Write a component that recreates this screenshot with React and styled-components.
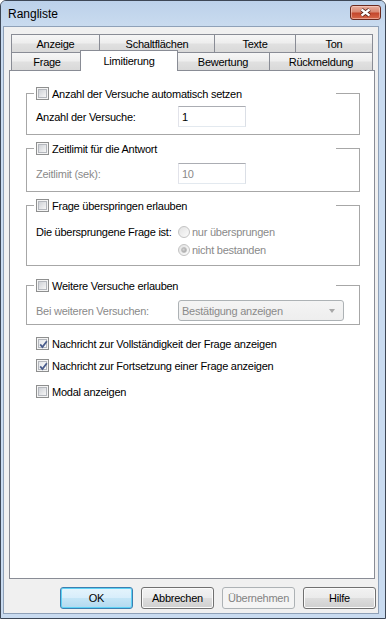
import React from 'react';
import styled, { createGlobalStyle, css } from 'styled-components';

const GlobalStyle = createGlobalStyle`
  html, body {
    margin: 0;
    padding: 0;
    background: #fff;
  }
  body {
    font-family: "Liberation Sans", Arial, sans-serif;
    font-size: 11px;
    letter-spacing: -0.25px;
    color: #000;
  }
`;

const Window = styled.div`
  width: 386px;
  height: 619px;
  box-sizing: border-box;
  border: 1px solid #3d4756;
  border-radius: 6px 6px 0 0;
  background: #c9dbf0;
  display: flex;
  flex-direction: column;
  overflow: hidden;
`;

const TitleBar = styled.div`
  height: 25px;
  flex: none;
  display: flex;
  align-items: center;
  padding: 0 4px 0 7px;
  background: linear-gradient(#bcd1ea, #c9dbef);
`;

const Title = styled.span`
  font-size: 12px;
  letter-spacing: 0;
  flex: 1;
  padding-top: 1px;
`;

const CloseButton = styled.div`
  width: 31px;
  height: 15px;
  box-sizing: border-box;
  align-self: flex-start;
  margin-top: 4px;
  border: 1px solid #6b2a1f;
  border-radius: 3px;
  background: linear-gradient(#e9ad9c 0%, #d98a74 45%, #c4472c 55%, #d7694b 100%);
  box-shadow: inset 0 0 0 1px rgba(255, 220, 210, 0.5);
  display: flex;
  svg { display: block; }
`;

const Body = styled.div`
  flex: 1;
  margin: 0 6px 4px 2px;
  border: 1px solid #8fa1b8;
  background: #f0f0f0;
  display: flex;
  flex-direction: column;
  padding: 7px 2px 4px 5px;
`;

const TabRow = styled.div`
  display: flex;
  margin-left: 2px;
  height: 18px;
`;

const Tab = styled.div`
  box-sizing: border-box;
  width: ${p => p.$w}px;
  height: 18px;
  margin-right: -1px;
  border: 1px solid #898c95;
  border-bottom: none;
  background: linear-gradient(#f6f6f6 0%, #eeeeee 45%, #e0e0e0 55%, #d9d9d9 100%);
  display: flex;
  align-items: center;
  justify-content: center;
  white-space: nowrap;
  padding-top: 1px;
  ${p => p.$active && css`
    position: relative;
    z-index: 1;
    height: 21px;
    margin: -2px -2px -1px -2px;
    background: #fff;
    padding-top: 0;
    padding-bottom: 1px;
  `}
`;

const Panel = styled.div`
  width: 366px;
  height: 509px;
  box-sizing: border-box;
  border: 1px solid #898c95;
  background: #fff;
  padding: 16px 0 0 16px;
  display: flex;
  flex-direction: column;
`;

const GroupBox = styled.fieldset`
  width: 334px;
  box-sizing: border-box;
  min-width: 0;
  margin: ${p => p.$mt || 0}px 0 0 0;
  padding: ${p => p.$pt}px 0 ${p => p.$pb}px 7px;
  border: 1px solid #a7a7a7;
`;

const Legend = styled.legend`
  width: 302px;
  height: 13px;
  box-sizing: border-box;
  padding: 0 0 0 2px;
  display: flex;
  align-items: center;
`;

const CheckLine = styled.div`
  display: flex;
  align-items: center;
  height: 13px;
  gap: 3px;
  margin: ${p => p.$mt || 0}px 0 0 10px;
`;

const Box = styled.span`
  width: 13px;
  height: 13px;
  box-sizing: border-box;
  flex: none;
  border: 1px solid #8e8f8f;
  background: #f4f4f4;
  padding: 1px;
  span {
    display: block;
    width: 100%;
    height: 100%;
    box-sizing: border-box;
    border: 1px solid #b4b7bd;
    background: ${p => p.$checked
      ? 'linear-gradient(135deg, #e4e6ea, #fbfbfb)'
      : 'linear-gradient(135deg, #cfd2d7, #f6f6f6)'};
    position: relative;
  }
  svg {
    position: absolute;
    left: -2px;
    top: -2px;
  }
`;

const Row = styled.div`
  display: flex;
  align-items: ${p => p.$top ? 'flex-start' : 'center'};
  margin-left: 2px;
`;

const FieldLabel = styled.span`
  width: 142px;
  flex: none;
  color: ${p => p.$disabled ? '#8a8a8a' : '#000'};
  white-space: nowrap;
  line-height: 18px;
`;

const TextInput = styled.div`
  width: 68px;
  height: 21px;
  box-sizing: border-box;
  border: 1px solid;
  border-color: #abadb3 #dbdfe6 #e3e9ef #e2e3ea;
  background: #fff;
  padding-left: 3px;
  display: flex;
  align-items: center;
  color: ${p => p.$disabled ? '#8a8a8a' : '#000'};
`;

const Options = styled.div`
  display: flex;
  flex-direction: column;
`;

const Option = styled.div`
  height: 18px;
  display: flex;
  align-items: center;
  gap: 2px;
  color: #8a8a8a;
`;

const Radio = styled.span`
  width: 12px;
  height: 12px;
  box-sizing: border-box;
  border-radius: 50%;
  border: 1px solid #c3c3c3;
  background: linear-gradient(135deg, #e2e2e2, #fbfbfb);
  display: flex;
  align-items: center;
  justify-content: center;
  &::after {
    content: '';
    display: ${p => p.$on ? 'block' : 'none'};
    width: 6px;
    height: 6px;
    border-radius: 50%;
    background: radial-gradient(circle at 40% 40%, #d6d6d6, #9a9a9a);
    border: 1px solid #bdbdbd;
    box-sizing: border-box;
  }
`;

const Combo = styled.div`
  width: 166px;
  height: 21px;
  box-sizing: border-box;
  border: 1px solid #adb2b5;
  border-radius: 3px;
  background: linear-gradient(#f4f4f4, #eeeeee);
  padding: 0 8px 0 3px;
  display: flex;
  align-items: center;
  justify-content: space-between;
  color: #8a8a8a;
  &::after {
    content: '';
    border-left: 3.5px solid transparent;
    border-right: 3.5px solid transparent;
    border-top: 4px solid #a8a8a8;
  }
`;

const ButtonBar = styled.div`
  display: flex;
  justify-content: flex-end;
  gap: 8px;
  margin-top: 8px;
  padding-right: 0px;
`;

const Button = styled.div`
  width: 73px;
  height: 22px;
  box-sizing: border-box;
  border: 1px solid #707070;
  border-radius: 3px;
  background: linear-gradient(#f2f2f2 0%, #ebebeb 48%, #dddddd 52%, #cfcfcf 100%);
  box-shadow: inset 0 0 0 1px #fbfbfb;
  display: flex;
  align-items: center;
  justify-content: center;
  ${p => p.$primary && css`
    border-color: #3c7fb1;
    background: linear-gradient(#e5f4fc 0%, #d8eefb 48%, #c4e5f6 52%, #b2d9ef 100%);
    box-shadow: inset 0 0 0 1px #5ed2f5;
  `}
  ${p => p.$disabled && css`
    border-color: #adb2b5;
    background: #f4f4f4;
    box-shadow: none;
    color: #838383;
  `}
`;

const CheckMark = () => (
  <svg width="13" height="13" viewBox="0 0 13 13">
    <path d="M3.2 6.4 L5.4 9 L9.8 3.2" fill="none" stroke="#4a5d8c" strokeWidth="1.8" />
  </svg>
);

const Check = ({ checked }) => (
  <Box $checked={checked}>
    <span>{checked && <CheckMark />}</span>
  </Box>
);

const CloseIcon = () => (
  <svg width="29" height="13" viewBox="0 0 29 13">
    <path d="M10.5 3.5 L18.5 9.5 M18.5 3.5 L10.5 9.5" stroke="#4b1a12" strokeWidth="4" />
    <path d="M10.5 3.5 L18.5 9.5 M18.5 3.5 L10.5 9.5" stroke="#fff" strokeWidth="2.2" />
  </svg>
);

const rowOne = [
  { label: 'Anzeige', w: 89 },
  { label: 'Schaltflächen', w: 116 },
  { label: 'Texte', w: 82 },
  { label: 'Ton', w: 78 },
];

const rowTwo = [
  { label: 'Frage', w: 72 },
  { label: 'Limitierung', w: 98, active: true },
  { label: 'Bewertung', w: 94 },
  { label: 'Rückmeldung', w: 104 },
];

export default function App() {
  return (
    <>
      <GlobalStyle />
      <Window>
        <TitleBar>
          <Title>Rangliste</Title>
          <CloseButton><CloseIcon /></CloseButton>
        </TitleBar>
        <Body>
          <TabRow>
            {rowOne.map(t => <Tab key={t.label} $w={t.w}>{t.label}</Tab>)}
          </TabRow>
          <TabRow>
            {rowTwo.map(t => <Tab key={t.label} $w={t.w} $active={t.active}>{t.label}</Tab>)}
          </TabRow>
          <Panel>
            <GroupBox $pt={6} $pb={7}>
              <Legend>
                <CheckLine style={{ margin: 0 }}>
                  <Check />Anzahl der Versuche automatisch setzen
                </CheckLine>
              </Legend>
              <Row>
                <FieldLabel>Anzahl der Versuche:</FieldLabel>
                <TextInput>1</TextInput>
              </Row>
            </GroupBox>

            <GroupBox $mt={7} $pt={8} $pb={7}>
              <Legend>
                <CheckLine style={{ margin: 0 }}>
                  <Check />Zeitlimit für die Antwort
                </CheckLine>
              </Legend>
              <Row>
                <FieldLabel $disabled>Zeitlimit (sek):</FieldLabel>
                <TextInput $disabled>10</TextInput>
              </Row>
            </GroupBox>

            <GroupBox $mt={7} $pt={11} $pb={6}>
              <Legend>
                <CheckLine style={{ margin: 0 }}>
                  <Check />Frage überspringen erlauben
                </CheckLine>
              </Legend>
              <Row $top>
                <FieldLabel>Die übersprungene Frage ist:</FieldLabel>
                <Options>
                  <Option><Radio />nur übersprungen</Option>
                  <Option><Radio $on />nicht bestanden</Option>
                </Options>
              </Row>
            </GroupBox>

            <GroupBox $mt={13} $pt={8} $pb={3}>
              <Legend>
                <CheckLine style={{ margin: 0 }}>
                  <Check />Weitere Versuche erlauben
                </CheckLine>
              </Legend>
              <Row>
                <FieldLabel $disabled>Bei weiteren Versuchen:</FieldLabel>
                <Combo>Bestätigung anzeigen</Combo>
              </Row>
            </GroupBox>

            <CheckLine $mt={12}>
              <Check checked />Nachricht zur Vollständigkeit der Frage anzeigen
            </CheckLine>
            <CheckLine $mt={9}>
              <Check checked />Nachricht zur Fortsetzung einer Frage anzeigen
            </CheckLine>
            <CheckLine $mt={13}>
              <Check />Modal anzeigen
            </CheckLine>
          </Panel>
          <ButtonBar>
            <Button $primary>OK</Button>
            <Button>Abbrechen</Button>
            <Button $disabled>Übernehmen</Button>
            <Button>Hilfe</Button>
          </ButtonBar>
        </Body>
      </Window>
    </>
  );
}
